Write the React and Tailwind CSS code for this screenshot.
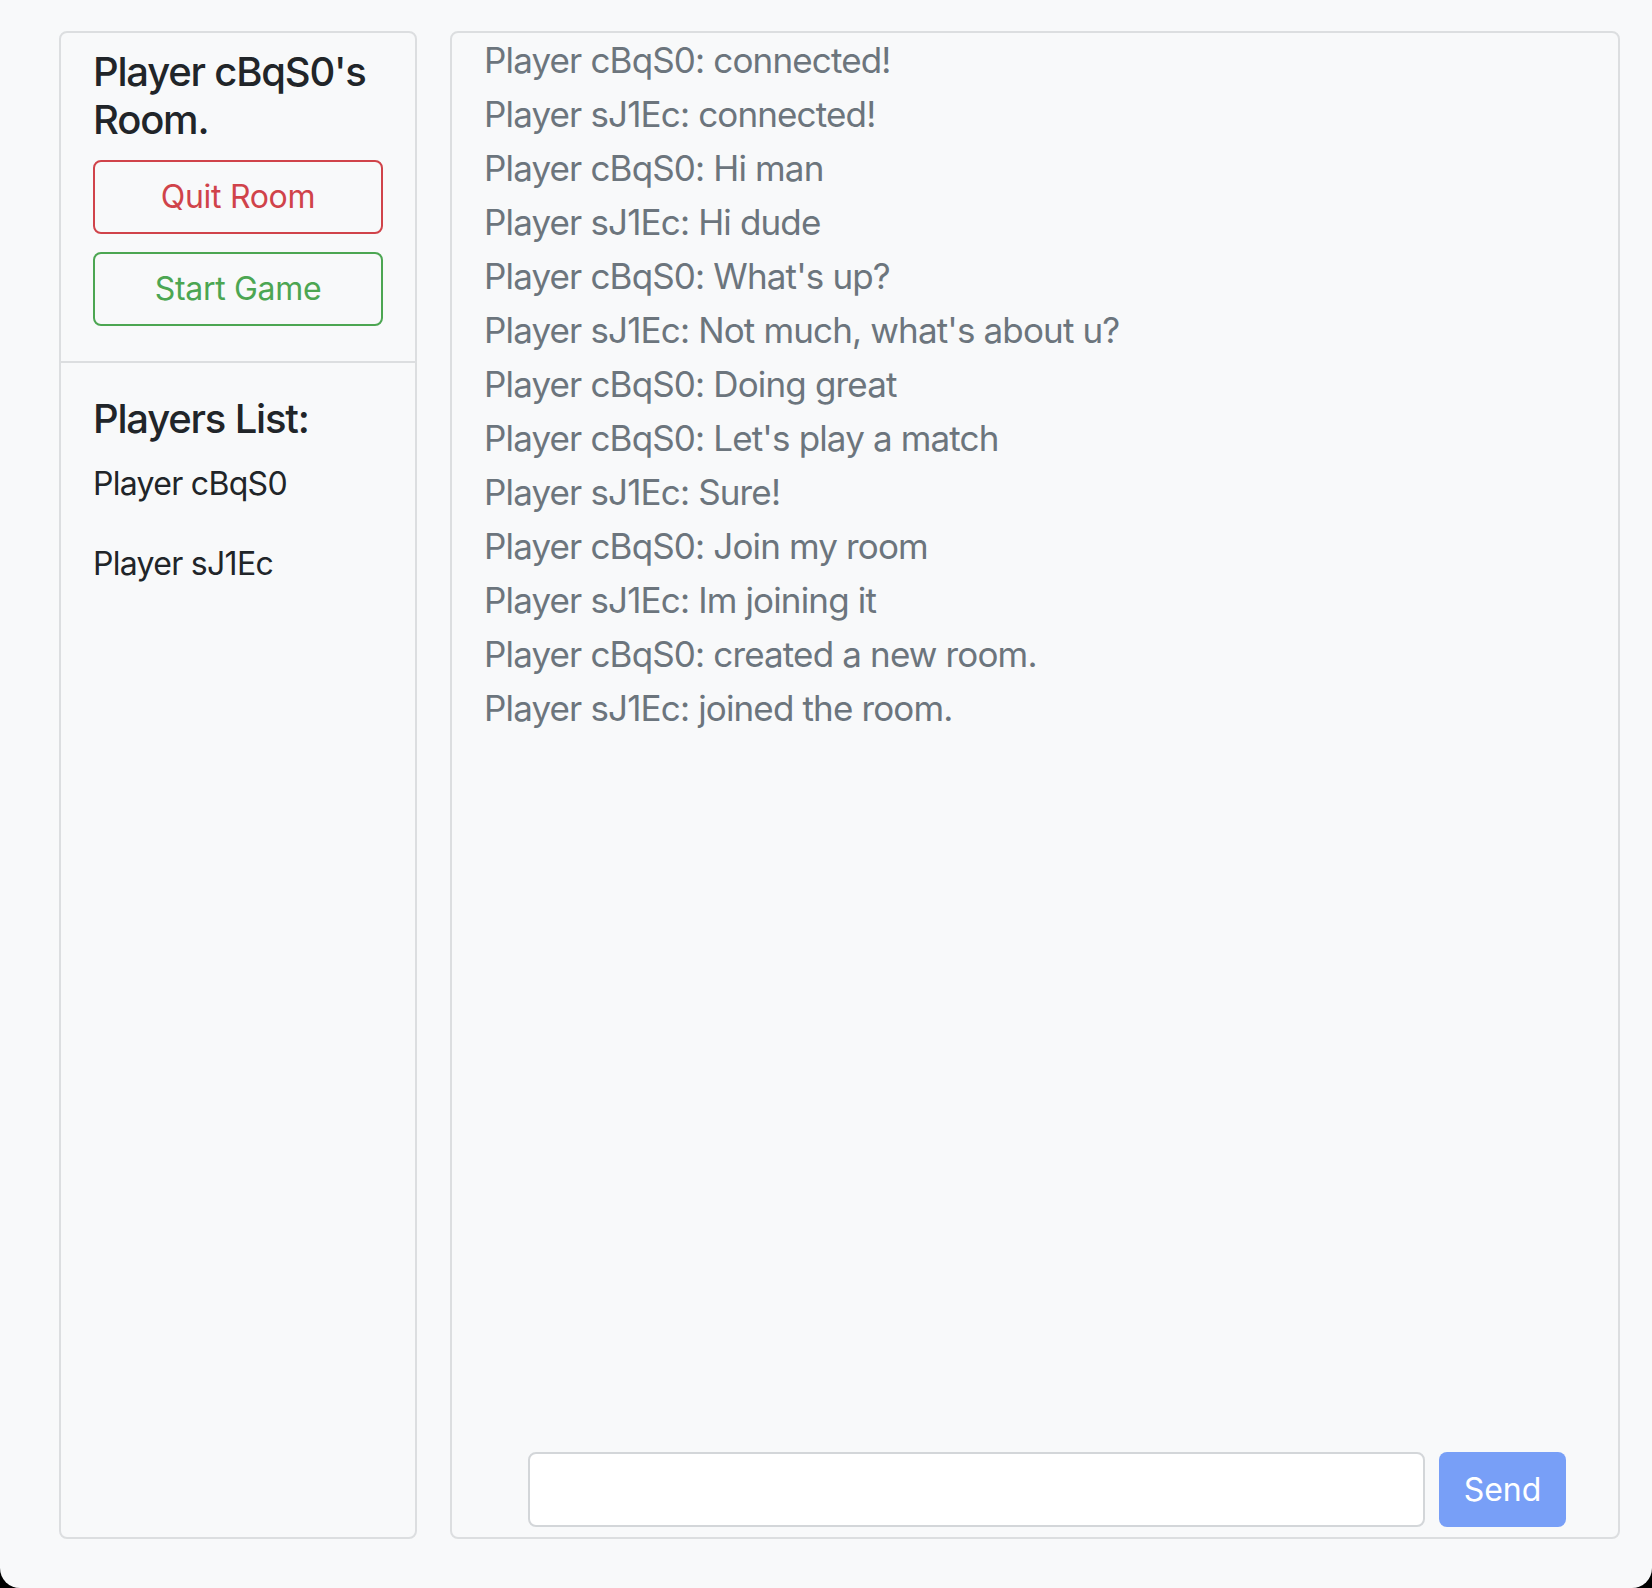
import React from "react";

const messages = [
  "Player cBqS0: connected!",
  "Player sJ1Ec: connected!",
  "Player cBqS0: Hi man",
  "Player sJ1Ec: Hi dude",
  "Player cBqS0: What's up?",
  "Player sJ1Ec: Not much, what's about u?",
  "Player cBqS0: Doing great",
  "Player cBqS0: Let's play a match",
  "Player sJ1Ec: Sure!",
  "Player cBqS0: Join my room",
  "Player sJ1Ec: Im joining it",
  "Player cBqS0: created a new room.",
  "Player sJ1Ec: joined the room.",
];

const players = ["Player cBqS0", "Player sJ1Ec"];

export default function App() {
  return (
    <div className="bg-black">
      <div className="h-[1588px] bg-[#f8f9fa] rounded-b-[20px] pt-[31px] pl-[59px] pr-[32px] font-['Inter','Noto_Sans',sans-serif] text-[#212529]">
        <div className="flex gap-[33px] h-[1508px]">
          {/* Room sidebar */}
          <div className="w-[358px] border-2 border-[#dcdee0] rounded-[8px] flex flex-col">
            <div className="px-[32px] pt-[15px] pb-[35px]">
              <h5 className="text-[40px] leading-[48px] font-medium tracking-[-1.2px] mb-[16px]">
                Player cBqS0's Room.
              </h5>
              <button className="w-full h-[74px] border-2 border-[#d0434a] rounded-[8px] text-[#d0434a] text-[32px] tracking-[-0.3px]">
                Quit Room
              </button>
              <button className="w-full h-[74px] mt-[18px] border-2 border-[#4ca652] rounded-[8px] text-[#4ca652] text-[32px] tracking-[-0.3px]">
                Start Game
              </button>
            </div>
            <div className="border-t-2 border-[#dcdee0] px-[32px] pt-[32px]">
              <h5 className="text-[40px] leading-[48px] font-medium tracking-[-1.2px] mb-[17px]">Players List:</h5>
              {players.map((p) => (
                <p key={p} className="text-[32px] leading-[48px] tracking-[-0.7px] mb-[32px]">
                  {p}
                </p>
              ))}
            </div>
          </div>

          {/* Chat */}
          <div className="flex-1 border-2 border-[#dcdee0] rounded-[8px] flex flex-col">
            <div className="flex-1 px-[32px]">
              {messages.map((m, i) => (
                <div key={i} className="text-[35px] leading-[54px] tracking-[-0.85px] text-[#6c757d]">
                  {m}
                </div>
              ))}
            </div>
            <div className="flex gap-[14px] pl-[76px] pr-[52px] pb-[10px]">
              <input className="flex-1 h-[75px] bg-white border-2 border-[#d3d6d9] rounded-[8px] px-4 text-[32px] outline-none" />
              <button className="w-[127px] h-[75px] bg-[#789ff7] rounded-[8px] text-white text-[32px]">
                Send
              </button>
            </div>
          </div>
        </div>
      </div>
    </div>
  );
}
